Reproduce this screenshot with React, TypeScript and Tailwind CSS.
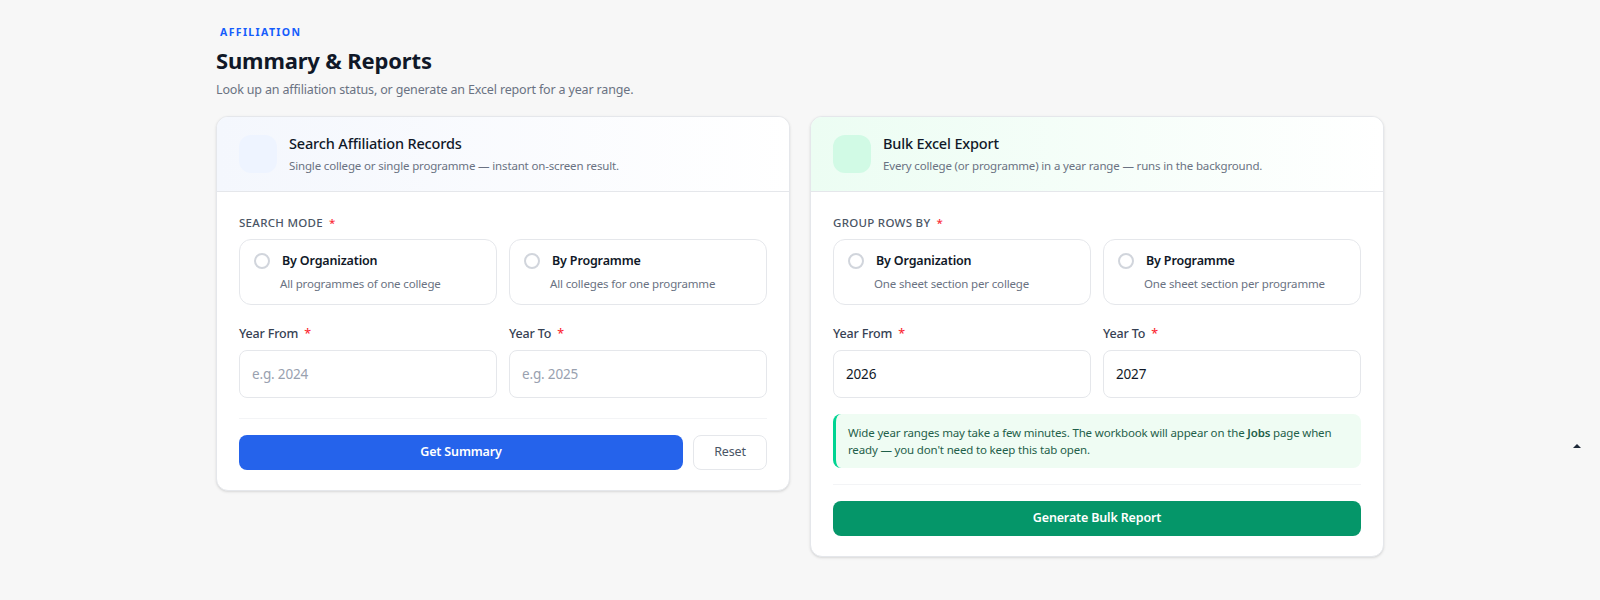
import { useState } from "react";

type Mode = "org" | "prog";

function Req() {
  return <span className="ml-1.5 text-red-500">*</span>;
}

function ModeOption({ title, hint, checked, onClick }: { title: string; hint: string; checked: boolean; onClick: () => void }) {
  return (
    <button
      type="button"
      onClick={onClick}
      className="flex h-[66px] flex-col justify-center rounded-xl border border-gray-200 bg-white px-[14px] text-left"
    >
      <div className="flex items-center gap-3">
        <span
          className={`h-4 w-4 rounded-full border-2 ${checked ? "border-blue-600" : "border-gray-300"}`}
        />
        <span className="text-[12.5px] font-semibold text-gray-900">{title}</span>
      </div>
      <span className="mt-1 pl-[26px] text-[11.5px] text-gray-500">{hint}</span>
    </button>
  );
}

function YearField({ label, value, placeholder }: { label: string; value?: string; placeholder: string }) {
  const [v, setV] = useState(value ?? "");
  return (
    <label className="flex flex-col">
      <span className="text-[12.5px] font-medium text-gray-700">
        {label}
        <Req />
      </span>
      <input
        value={v}
        onChange={(e) => setV(e.target.value)}
        placeholder={placeholder}
        className="mt-[6px] h-[48px] rounded-lg border border-gray-200 bg-white px-3 text-[13.5px] text-gray-900 placeholder:text-gray-400 outline-none"
      />
    </label>
  );
}

function CardHeader({ title, sub, tone }: { title: string; sub: string; tone: "blue" | "green" }) {
  return (
    <div
      className={`flex h-[75px] items-center gap-3 border-b border-gray-200 px-[22px] ${
        tone === "blue" ? "bg-gradient-to-r from-[#f4f7fd] to-white" : "bg-gradient-to-r from-[#ecfdf3] to-white"
      }`}
    >
      <div className={`h-[38px] w-[38px] rounded-xl ${tone === "blue" ? "bg-[#eef4ff]" : "bg-[#d1fae5]"}`} />
      <div>
        <div className="text-[14.5px] font-medium text-gray-900">{title}</div>
        <div className="mt-0.5 text-[11.5px] text-gray-500">{sub}</div>
      </div>
    </div>
  );
}

export default function App() {
  const [searchMode, setSearchMode] = useState<Mode | null>(null);
  const [groupBy, setGroupBy] = useState<Mode | null>(null);

  return (
    <div className="relative min-h-[600px] bg-[#f7f7f7] font-['Noto_Sans',sans-serif] tracking-[-0.01em]">
      <div className="mx-auto w-[1168px] pt-[25px]">
        <div className="px-1 text-[10.5px] font-bold tracking-[0.13em] text-blue-600">AFFILIATION</div>
        <h1 className="mt-[3px] text-[22px] font-bold text-gray-900">Summary &amp; Reports</h1>
        <p className="mt-1 text-[12.5px] text-gray-500">Look up an affiliation status, or generate an Excel report for a year range.</p>

        <div className="mt-4 grid grid-cols-2 items-start gap-5">
          {/* Search */}
          <div className="overflow-hidden rounded-xl border border-gray-200 bg-white shadow-sm">
            <CardHeader
              tone="blue"
              title="Search Affiliation Records"
              sub="Single college or single programme — instant on-screen result."
            />
            <div className="px-[22px] pb-5 pt-[22px]">
              <div className="text-[11.5px] font-medium uppercase tracking-wide text-gray-600">
                Search Mode
                <Req />
              </div>
              <div className="mt-2 grid grid-cols-2 gap-3">
                <ModeOption title="By Organization" hint="All programmes of one college" checked={searchMode === "org"} onClick={() => setSearchMode("org")} />
                <ModeOption title="By Programme" hint="All colleges for one programme" checked={searchMode === "prog"} onClick={() => setSearchMode("prog")} />
              </div>
              <div className="mt-5 grid grid-cols-2 gap-3">
                <YearField label="Year From" placeholder="e.g. 2024" />
                <YearField label="Year To" placeholder="e.g. 2025" />
              </div>
              <div className="mt-5 border-t border-gray-100 pt-4">
                <div className="flex gap-2.5">
                  <button className="h-[35px] flex-1 rounded-lg bg-[#2563eb] text-[12.5px] font-semibold text-white">Get Summary</button>
                  <button className="h-[35px] w-[74px] rounded-lg border border-gray-200 bg-white text-[12.5px] text-gray-600">Reset</button>
                </div>
              </div>
            </div>
          </div>

          {/* Bulk export */}
          <div className="overflow-hidden rounded-xl border border-gray-200 bg-white shadow-sm">
            <CardHeader
              tone="green"
              title="Bulk Excel Export"
              sub="Every college (or programme) in a year range — runs in the background."
            />
            <div className="px-[22px] pb-5 pt-[22px]">
              <div className="text-[11.5px] font-medium uppercase tracking-wide text-gray-600">
                Group Rows By
                <Req />
              </div>
              <div className="mt-2 grid grid-cols-2 gap-3">
                <ModeOption title="By Organization" hint="One sheet section per college" checked={groupBy === "org"} onClick={() => setGroupBy("org")} />
                <ModeOption title="By Programme" hint="One sheet section per programme" checked={groupBy === "prog"} onClick={() => setGroupBy("prog")} />
              </div>
              <div className="mt-5 grid grid-cols-2 gap-3">
                <YearField label="Year From" placeholder="e.g. 2024" value="2026" />
                <YearField label="Year To" placeholder="e.g. 2025" value="2027" />
              </div>
              <div className="mt-4 rounded-lg border-l-[3px] border-emerald-400 bg-[#effcf3] py-2.5 pl-3 pr-3 text-[11.5px] leading-[17px] text-[#1f5f4a]">
                Wide year ranges may take a few minutes. The workbook will appear on the <b className="font-semibold">Jobs</b> page when ready — you don't need to keep this tab open.
              </div>
              <div className="mt-4 border-t border-gray-100 pt-4">
                <button className="h-[35px] w-full rounded-lg bg-[#059669] text-[12.5px] font-semibold text-white">Generate Bulk Report</button>
              </div>
            </div>
          </div>
        </div>
      </div>

      {/* scroll-to-top caret */}
      <div className="absolute left-[1573px] top-[444px] h-0 w-0 border-x-[4px] border-b-[4px] border-x-transparent border-b-gray-800" />
    </div>
  );
}
